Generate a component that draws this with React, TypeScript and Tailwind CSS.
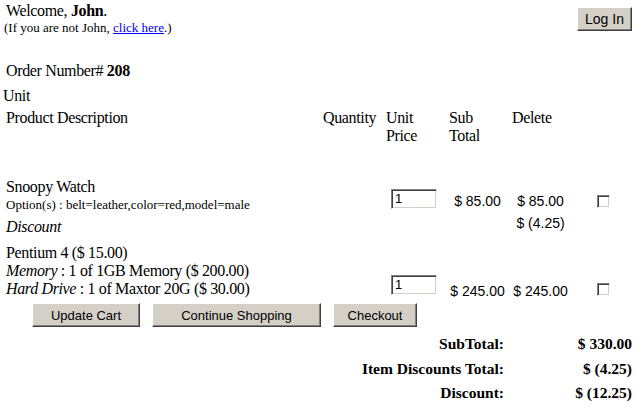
const btn =
  "bg-[#d4d0c8] border border-t-white border-l-white border-b-[#404040] border-r-[#404040] shadow-[inset_-1px_-1px_0_#808080] font-['Liberation_Sans',Arial,sans-serif] text-[13px] leading-[15px] text-black tracking-normal flex items-center justify-center";

const sunken =
  "border border-t-[#808080] border-l-[#808080] border-b-white border-r-white shadow-[inset_1px_1px_0_#404040,inset_-1px_-1px_0_#d4d0c8] bg-white";

function Qty() {
  return (
    <div className={`${sunken} w-[46px] h-[20px] pl-[3px] font-['Liberation_Sans',Arial,sans-serif] text-[13px] leading-[18px] tracking-normal`}>
      1
    </div>
  );
}

function Check() {
  return <span className={`${sunken} block w-[13px] h-[13px] mx-auto`}></span>;
}

export default function App() {
  const sans = "font-['Liberation_Sans',Arial,sans-serif] text-[14px] leading-[16px] tracking-normal";
  return (
    <div className="w-[642px] h-[415px] bg-white text-black font-['Liberation_Serif','Times_New_Roman',serif] text-[16px] leading-[18px] tracking-[-0.35px] overflow-hidden">
      {/* header */}
      <div className="flex justify-between pt-[2px] pr-[10px]">
        <div>
          <p className="pl-[6px]">
            Welcome, <b>John</b>.
          </p>
          <p className="pl-[4px] text-[13px] leading-[15px] tracking-normal">
            (If you are not John,{" "}
            <a href="#" className="text-[#0000ff] underline">
              click here
            </a>
            .)
          </p>
        </div>
        <button className={`${btn} w-[55px] h-[24px] mt-[5px] text-[14px]`}>Log In</button>
      </div>

      <p className="pl-[6px] mt-[27px]">
        Order Number# <b>208</b>
      </p>
      <p className="pl-[3px] mt-[7px]">Unit</p>

      {/* column headings */}
      <div className="flex mt-[4px]">
        <div className="w-[323px] pl-[6px]">Product Description</div>
        <div className="w-[63px]">Quantity</div>
        <div className="w-[63px]">
          Unit
          <br />
          Price
        </div>
        <div className="w-[63px]">
          Sub
          <br />
          Total
        </div>
        <div>Delete</div>
      </div>

      {/* item 1 */}
      <div className="flex mt-[33px]">
        <div className="w-[385px] pl-[6px]">
          <p>Snoopy Watch</p>
          <p className="text-[13px] leading-[15px] mt-[1px] tracking-normal">Option(s) : belt=leather,color=red,model=male</p>
        </div>
        <div className="w-[61px] pl-[6px] pt-[11px]">
          <Qty />
        </div>
        <div className={`w-[63px] text-center pt-[15px] ${sans}`}>$ 85.00</div>
        <div className={`w-[63px] text-center pt-[15px] ${sans}`}>$ 85.00</div>
        <div className="w-[62px] pt-[17px]">
          <Check />
        </div>
      </div>
      <div className="flex mt-[6px]">
        <div className="w-[509px] pl-[6px] italic">Discount</div>
        <div className={`w-[63px] text-center -mt-[3px] ${sans}`}>$ (4.25)</div>
      </div>

      {/* item 2 */}
      <div className="flex mt-[8px]">
        <div className="w-[385px] pl-[6px]">
          <p>Pentium 4 ($ 15.00)</p>
          <p>
            <i>Memory</i> : 1 of 1GB Memory ($ 200.00)
          </p>
          <p>
            <i>Hard Drive</i> : 1 of Maxtor 20G ($ 30.00)
          </p>
        </div>
        <div className="w-[61px] pl-[6px] pt-[31px]">
          <Qty />
        </div>
        <div className={`w-[63px] text-center pt-[39px] ${sans}`}>$ 245.00</div>
        <div className={`w-[63px] text-center pt-[39px] ${sans}`}>$ 245.00</div>
        <div className="w-[62px] pt-[39px]">
          <Check />
        </div>
      </div>

      {/* actions */}
      <div className="flex gap-[12px] pl-[32px] mt-[4px]">
        <button className={`${btn} w-[108px] h-[24px]`}>Update Cart</button>
        <button className={`${btn} w-[169px] h-[24px]`}>Continue Shopping</button>
        <button className={`${btn} w-[84px] h-[24px]`}>Checkout</button>
      </div>

      {/* totals */}
      <div className="grid grid-cols-[1fr_128px] pr-[10px] mt-[8px] gap-y-[6.5px] font-bold text-[15.5px] leading-[18px] tracking-normal text-right">
        <div>SubTotal:</div>
        <div>$ 330.00</div>
        <div>Item Discounts Total:</div>
        <div>$ (4.25)</div>
        <div>Discount:</div>
        <div>$ (12.25)</div>
      </div>
    </div>
  );
}
